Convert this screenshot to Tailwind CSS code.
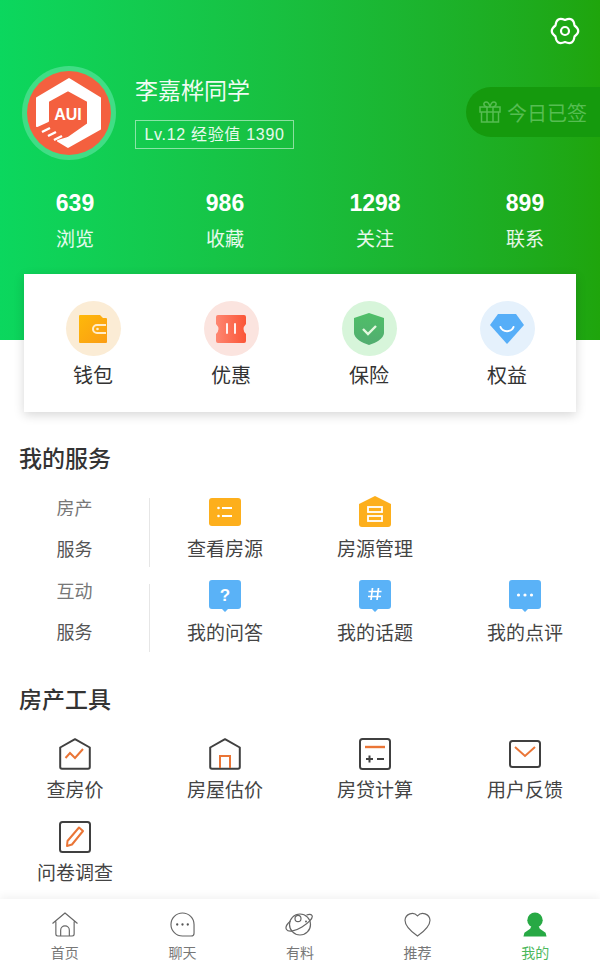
<!DOCTYPE html>
<html lang="zh-CN">
<head>
    <meta charset="UTF-8">
    <meta name="viewport" content="width=device-width, initial-scale=1.0">
    <title>我的</title>
    <script src="https://cdn.jsdelivr.net/npm/@tailwindcss/browser@4"></script>
</head>
<body class="bg-white font-['Liberation_Sans','Noto_Sans_CJK_SC',sans-serif]">
<div class="relative flex h-[974px] w-[600px] flex-col overflow-hidden bg-white">

    <!-- 头部 -->
    <div class="relative h-[340px] shrink-0 bg-gradient-to-r from-[#0bd75e] to-[#1fa50c] text-white">
        <div class="flex justify-end pt-[16px] pr-[20px]">
            <svg class="h-[30px] w-[30px]" viewBox="0 0 30 30" fill="none" stroke="#fff" stroke-width="2.200" stroke-linejoin="round">
                <path d="M24.500 9.500Q32 15 24.500 20.500Q23.500 29.700 15 26Q6.500 29.700 5.500 20.500Q-2 15 5.500 9.500Q6.500 .3 15 4Q23.500 .3 24.500 9.500Z"/>
                <circle cx="15" cy="15" r="4"/>
            </svg>
        </div>

        <!-- 用户信息 -->
        <div class="mt-[20px] flex items-center pl-[22px]">
            <div class="flex h-[94px] w-[94px] items-center justify-center rounded-full bg-[#40dd85]">
                <svg class="h-[84px] w-[84px]" viewBox="0 0 84 84">
                    <circle cx="42" cy="42" r="42" fill="#f4603f"/>
                    <path d="M10 55V27L42 8 73 27V58L41 76 31 70 41 67 61 53V30L41 19 21 30V50Z" fill="#fff" stroke="#fff" stroke-width="2" stroke-linejoin="round"/>
                    <path d="M15 61l8-4M21 65l8-4M27 69l8-4" stroke="#fff" stroke-width="2.500"/>
                    <text x="41" y="49" text-anchor="middle" fill="#fff" font-size="16" font-weight="700" font-family="Liberation Sans, sans-serif">AUI</text>
                </svg>
            </div>
            <div class="mb-[3px] ml-[19px]">
                <div class="text-[23px] leading-[34px] text-white/95">李嘉桦同学</div>
                <div class="mt-[12px] flex h-[29px] w-[159px] items-center justify-center border border-white/50 text-[16px] tracking-[0.7px] text-white/90">Lv.12 经验值 1390</div>
            </div>
        </div>

        <!-- 今日已签 -->
        <div class="absolute top-[87px] right-0 flex h-[50px] w-[134px] items-center rounded-l-[25px] bg-[#159a0d] pl-[13px] text-[#56bd52]">
            <svg class="h-[22px] w-[22px]" viewBox="0 0 22 22" fill="none" stroke="currentColor" stroke-width="1.500">
                <rect x="1" y="6" width="20" height="5"/>
                <path d="M2.500 11v10h17V11M8 6v15M14 6v15M8 6C4 5 4 1 7 1s4 5 4 5 1-5 4-5 3 4-1 5"/>
            </svg>
            <span class="ml-[6px] pt-[4px] text-[20px]">今日已签</span>
        </div>

        <!-- 统计 -->
        <div class="mt-[27px] grid grid-cols-4 text-center">
            <div><div class="text-[23px] leading-[32px] font-bold">639</div><div class="mt-[6px] text-[19px] leading-[30px] text-white/90">浏览</div></div>
            <div><div class="text-[23px] leading-[32px] font-bold">986</div><div class="mt-[6px] text-[19px] leading-[30px] text-white/90">收藏</div></div>
            <div><div class="text-[23px] leading-[32px] font-bold">1298</div><div class="mt-[6px] text-[19px] leading-[30px] text-white/90">关注</div></div>
            <div><div class="text-[23px] leading-[32px] font-bold">899</div><div class="mt-[6px] text-[19px] leading-[30px] text-white/90">联系</div></div>
        </div>
    </div>

    <!-- 卡片 -->
    <div class="relative mx-[24px] -mt-[66px] grid h-[138px] shrink-0 grid-cols-4 bg-white pt-[27px] shadow-[0_3px_10px_rgba(0,0,0,0.16)]">
        <div class="flex flex-col items-center">
            <div class="flex h-[55px] w-[55px] items-center justify-center rounded-full bg-[#fbecd5]">
                <svg class="h-[30px] w-[30px]" viewBox="0 0 30 30">
                    <defs><linearGradient id="qb" x1="0" y1="0" x2="1" y2="1"><stop offset="0" stop-color="#feb90a"/><stop offset="1" stop-color="#fb9d14"/></linearGradient></defs>
                    <path d="M1 2a1 1 0 0 1 1-1h20l3 3h3a1 1 0 0 1 1 1v23a1 1 0 0 1-1 1H2a1 1 0 0 1-1-1z" fill="url(#qb)"/>
                    <path d="M28 11h-9a4 4 0 0 0 0 8h9" fill="none" stroke="#ffeccb" stroke-width="2"/>
                    <circle cx="19.500" cy="15" r="1.300" fill="#ffeccb"/>
                </svg>
            </div>
            <div class="mt-[5px] text-[20px] leading-[30px] text-[#333]">钱包</div>
        </div>
        <div class="flex flex-col items-center">
            <div class="flex h-[55px] w-[55px] items-center justify-center rounded-full bg-[#fbe4df]">
                <svg class="h-[28px] w-[32px]" viewBox="0 0 32 28">
                    <defs><linearGradient id="yh" x1="0" x2="1"><stop offset="0" stop-color="#fe8671"/><stop offset="1" stop-color="#fb5536"/></linearGradient></defs>
                    <path d="M3 0h26a2 2 0 0 1 2 2v7Q26 14 31 19v7a2 2 0 0 1-2 2H3a2 2 0 0 1-2-2v-7Q6 14 1 9V2a2 2 0 0 1 2-2z" fill="url(#yh)"/>
                    <path d="M12 9v9M20 9v9" stroke="#fff" stroke-width="1.800" stroke-linecap="round"/>
                </svg>
            </div>
            <div class="mt-[5px] text-[20px] leading-[30px] text-[#333]">优惠</div>
        </div>
        <div class="flex flex-col items-center">
            <div class="flex h-[55px] w-[55px] items-center justify-center rounded-full bg-[#d7f5da]">
                <svg class="h-[34px] w-[32px]" viewBox="0 0 32 34">
                    <defs><linearGradient id="bx" x1="0" y1="0" x2="0" y2="1"><stop offset="0" stop-color="#4fbf68"/><stop offset="1" stop-color="#52ad70"/></linearGradient></defs>
                    <path d="M16 1 31 6v15c0 5-8 10-15 12C9 31 1 26 1 21V6z" fill="url(#bx)"/>
                    <path d="M10 17l5 5 8-8" fill="none" stroke="#e4f8df" stroke-width="2.400"/>
                </svg>
            </div>
            <div class="mt-[5px] text-[20px] leading-[30px] text-[#333]">保险</div>
        </div>
        <div class="flex flex-col items-center">
            <div class="flex h-[55px] w-[55px] items-center justify-center rounded-full bg-[#e5f1fc]">
                <svg class="h-[34px] w-[34px]" viewBox="0 0 34 34">
                    <path d="M8 2h18l8 11-17 19L0 13z" fill="#56aef8"/>
                    <path d="M10.500 15c2 5.500 11 5.500 13 0" fill="none" stroke="#fff" stroke-width="2" stroke-linecap="round"/>
                </svg>
            </div>
            <div class="mt-[5px] text-[20px] leading-[30px] text-[#333]">权益</div>
        </div>
    </div>

    <!-- 我的服务 -->
    <div class="mt-[30px] pl-[19px] text-[23px] leading-[34px] font-medium text-[#333]">我的服务</div>
    <div class="mt-[22px] flex h-[69px] items-stretch">
        <div class="flex w-[150px] flex-col items-center justify-between border-r border-[#e6e6e6] text-[18px] leading-[26px]">
            <span class="-mt-[2px] text-[#777]">房产</span>
            <span class="mb-[4px] text-[#555]">服务</span>
        </div>
        <div class="grid flex-1 grid-cols-3 text-center text-[19px] leading-[26px] text-[#444]">
            <div class="flex flex-col items-center">
                <svg class="h-[29px] w-[32px]" viewBox="0 0 32 29">
                    <rect width="32" height="28" rx="3" fill="#fdaf1c"/>
                    <path d="M13 10h10M13 18h10" stroke="#fff" stroke-width="2"/>
                    <circle cx="9.500" cy="10" r="1.300" fill="#fff"/><circle cx="9.500" cy="18" r="1.300" fill="#fff"/>
                </svg>
                <span class="mt-[10px]">查看房源</span>
            </div>
            <div class="flex flex-col items-center">
                <svg class="-mt-[2px] h-[31px] w-[32px]" viewBox="0 0 32 31">
                    <path d="M16 0 32 8v20a3 3 0 0 1-3 3H3a3 3 0 0 1-3-3V8z" fill="#fdaf1c"/>
                    <rect x="9" y="11" width="14" height="5" fill="none" stroke="#fff" stroke-width="1.800"/>
                    <rect x="9" y="20" width="14" height="5" fill="none" stroke="#fff" stroke-width="1.800"/>
                </svg>
                <span class="mt-[10px]">房源管理</span>
            </div>
        </div>
    </div>
    <div class="mt-[17px] flex h-[68px] items-stretch">
        <div class="flex w-[150px] flex-col items-center justify-between border-r border-[#e6e6e6] text-[18px] leading-[26px]">
            <span class="-mt-[5px] text-[#777]">互动</span>
            <span class="mb-[6px] text-[#555]">服务</span>
        </div>
        <div class="grid flex-1 grid-cols-3 text-center text-[19px] leading-[26px] text-[#444]">
            <div class="flex flex-col items-center">
                <svg class="-mt-[4px] h-[32px] w-[32px]" viewBox="0 0 32 32">
                    <path d="M3 0h26a3 3 0 0 1 3 3v23a3 3 0 0 1-3 3H19l-3 3-3-3H3a3 3 0 0 1-3-3V3a3 3 0 0 1 3-3z" fill="#5ab2f7"/>
                    <text x="16" y="21" text-anchor="middle" fill="#fff" font-size="17" font-weight="700" font-family="Liberation Sans, sans-serif">?</text>
                </svg>
                <span class="mt-[9px]">我的问答</span>
            </div>
            <div class="flex flex-col items-center">
                <svg class="-mt-[4px] h-[32px] w-[32px]" viewBox="0 0 32 32">
                    <path d="M3 0h26a3 3 0 0 1 3 3v23a3 3 0 0 1-3 3H19l-3 3-3-3H3a3 3 0 0 1-3-3V3a3 3 0 0 1 3-3z" fill="#5ab2f7"/>
                    <path d="M13.500 8l-1.500 12M19.500 8 18 20M9.500 11.500h13M9 16.500h13" stroke="#fff" stroke-width="1.700" fill="none"/>
                </svg>
                <span class="mt-[9px]">我的话题</span>
            </div>
            <div class="flex flex-col items-center">
                <svg class="-mt-[4px] h-[32px] w-[32px]" viewBox="0 0 32 32">
                    <path d="M3 0h26a3 3 0 0 1 3 3v23a3 3 0 0 1-3 3H19l-3 3-3-3H3a3 3 0 0 1-3-3V3a3 3 0 0 1 3-3z" fill="#5ab2f7"/>
                    <circle cx="9.500" cy="15" r="1.600" fill="#fff"/><circle cx="16" cy="15" r="1.600" fill="#fff"/><circle cx="22.500" cy="15" r="1.600" fill="#fff"/>
                </svg>
                <span class="mt-[9px]">我的点评</span>
            </div>
        </div>
    </div>

    <!-- 房产工具 -->
    <div class="mt-[31px] pl-[19px] text-[23px] leading-[34px] font-medium text-[#333]">房产工具</div>
    <div class="mt-[21px] grid grid-cols-4 gap-y-[17px] text-center text-[19px] leading-[26px] text-[#444]">
        <div class="flex flex-col items-center">
            <svg class="h-[32px] w-[32px]" viewBox="0 0 32 32" fill="none">
                <path d="M1.200 9.500 16 1.200 30.800 9.500V29a1.800 1.800 0 0 1-1.800 1.800H3A1.800 1.800 0 0 1 1.200 29z" stroke="#404040" stroke-width="2" stroke-linejoin="round"/>
                <path d="M6.500 20l4.500-5 5 5 8-9" stroke="#ea7536" stroke-width="2"/>
            </svg>
            <span class="mt-[8px]">查房价</span>
        </div>
        <div class="flex flex-col items-center">
            <svg class="h-[32px] w-[32px]" viewBox="0 0 32 32" fill="none">
                <path d="M1.200 9.500 16 1.200 30.800 9.500V29a1.800 1.800 0 0 1-1.800 1.800H3A1.800 1.800 0 0 1 1.200 29z" stroke="#404040" stroke-width="2" stroke-linejoin="round"/>
                <path d="M11 30V18h10v12" stroke="#ea7536" stroke-width="2"/>
            </svg>
            <span class="mt-[8px]">房屋估价</span>
        </div>
        <div class="flex flex-col items-center">
            <svg class="h-[32px] w-[32px]" viewBox="0 0 32 32" fill="none">
                <rect x="1" y="1" width="30" height="30" rx="2.500" stroke="#404040" stroke-width="2"/>
                <path d="M6 9h20" stroke="#ea7536" stroke-width="2.400"/>
                <path d="M7 21h7M10.500 17.500v7M18 21h7" stroke="#404040" stroke-width="2"/>
            </svg>
            <span class="mt-[8px]">房贷计算</span>
        </div>
        <div class="flex flex-col items-center">
            <svg class="h-[32px] w-[32px]" viewBox="0 0 32 32" fill="none">
                <rect x="1" y="3" width="30" height="26" rx="2.500" stroke="#404040" stroke-width="2"/>
                <path d="M6 9l10 9 10-9" stroke="#ea7536" stroke-width="2"/>
            </svg>
            <span class="mt-[8px]">用户反馈</span>
        </div>
        <div class="flex flex-col items-center">
            <svg class="h-[32px] w-[32px]" viewBox="0 0 32 32" fill="none">
                <rect x="1" y="1" width="30" height="30" rx="2.500" stroke="#404040" stroke-width="2"/>
                <path d="M20 6.500l4 3.500-11 13.500-5 1.500 .5-5z" stroke="#ea7536" stroke-width="2" stroke-linejoin="round"/>
            </svg>
            <span class="mt-[8px]">问卷调查</span>
        </div>
    </div>

    <!-- 底部导航 -->
    <div class="absolute right-0 bottom-0 left-0 grid h-[75px] grid-cols-5 bg-white px-[6px] pt-[13px] text-center text-[14px] leading-[20px] text-[#777] shadow-[0_-3px_8px_rgba(0,0,0,0.05)]">
        <div class="flex flex-col items-center">
            <svg class="h-[25px] w-[28px]" viewBox="0 0 28 26" fill="none" stroke="#666" stroke-width="1.200" stroke-linejoin="round">
                <path d="M1 12 14 1l13 11M4.500 10v13a2 2 0 0 0 2 2h15a2 2 0 0 0 2-2V10M9.500 25v-6a4.500 4.500 0 0 1 9 0v6"/>
            </svg>
            <span class="mt-[6px]">首页</span>
        </div>
        <div class="flex flex-col items-center">
            <svg class="h-[25px] w-[25px]" viewBox="0 0 26 26" fill="none" stroke="#666" stroke-width="1.200">
                <path d="M13 1a12 12 0 0 1 12 12v9a3 3 0 0 1-3 3h-9a12 12 0 0 1 0-24z"/>
                <circle cx="7.500" cy="13" r="1.200" fill="#555" stroke="none"/><circle cx="13" cy="13" r="1.200" fill="#555" stroke="none"/><circle cx="18.500" cy="13" r="1.200" fill="#555" stroke="none"/>
            </svg>
            <span class="mt-[6px]">聊天</span>
        </div>
        <div class="flex flex-col items-center">
            <svg class="h-[25px] w-[29px]" viewBox="0 0 29 25" fill="none" stroke="#666" stroke-width="1.200">
                <circle cx="15" cy="12.500" r="10.500"/>
                <path d="M5.500 9C2 12 .2 15.500 1.500 17.500c2 3 9 1.500 15.500-2.500S28.500 6 27 3.500C26 2 24 2 21.500 3"/>
                <ellipse cx="13" cy="6.500" rx="3" ry="3.200"/>
                <circle cx="21" cy="9.500" r="1" fill="#666" stroke="none"/>
            </svg>
            <span class="mt-[6px]">有料</span>
        </div>
        <div class="flex flex-col items-center">
            <svg class="h-[25px] w-[27px]" viewBox="0 0 28 26" fill="none" stroke="#666" stroke-width="1.200">
                <path d="M14 25C7 20 1 15 1 8.500A7.500 7.500 0 0 1 14 4a7.500 7.500 0 0 1 13 4.500C27 15 21 20 14 25z"/>
            </svg>
            <span class="mt-[6px]">推荐</span>
        </div>
        <div class="flex flex-col items-center text-[#4cb85c]">
            <svg class="h-[25px] w-[24px]" viewBox="0 0 24 26">
                <circle cx="12" cy="8.500" r="8" fill="#27a944"/>
                <path d="M8 15h8l1 2.500 6 4 1 4H0l1-4 6-4z" fill="#27a944"/>
            </svg>
            <span class="mt-[6px]">我的</span>
        </div>
    </div>
</div>
</body>
</html>
